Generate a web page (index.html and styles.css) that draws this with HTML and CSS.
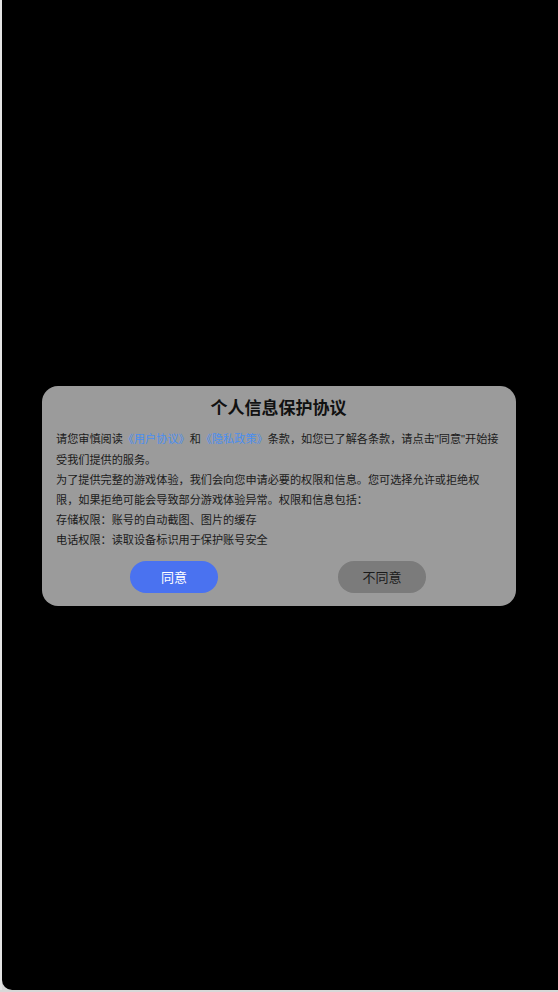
FILE: index.html
```html
<!DOCTYPE html>
<html lang="zh-CN">
<head>
<meta charset="utf-8">
<title>个人信息保护协议</title>
<link rel="stylesheet" href="styles.css">
</head>
<body>
<div class="frame">
  <div class="edge"></div>
  <div class="screen">
    <div class="dialog">
      <div class="title">个人信息保护协议</div>
      <div class="content">
        <p>请您审慎阅读<a class="link">《用户协议》</a>和<a class="link">《隐私政策》</a>条款，如您已了解各条款，请点击<span class="q">"</span>同意<span class="q">"</span>开始接受我们提供的服务。</p>
        <p>为了提供完整的游戏体验，我们会向您申请必要的权限和信息。您可选择允许或拒绝权限，如果拒绝可能会导致部分游戏体验异常。权限和信息包括：</p>
        <p>存储权限：账号的自动截图、图片的缓存</p>
        <p>电话权限：读取设备标识用于保护账号安全</p>
      </div>
      <div class="actions">
        <button class="btn btn-agree">同意</button>
        <button class="btn btn-decline">不同意</button>
      </div>
    </div>
  </div>
</div>
</body>
</html>
```
FILE: styles.css
```css
html, body {
  margin: 0;
  padding: 0;
  width: 558px;
  height: 992px;
  overflow: hidden;
  background: #d8d8d8;
  font-family: "Noto Sans CJK SC", "Noto Sans", sans-serif;
}

.frame {
  display: flex;
  height: 990px;
}

.edge {
  width: 2px;
  background: #e4e4e4;
}

.screen {
  flex: 1;
  background: #000;
  border-bottom-left-radius: 10px;
  display: flex;
  align-items: center;
  justify-content: center;
}

.dialog {
  width: 474px;
  box-sizing: border-box;
  margin-right: 2px;
  margin-top: 1px;
  background: #9b9b9b;
  border-radius: 16px;
  padding: 9px 15px 13px 14px;
}

.title {
  text-align: center;
  font-size: 17px;
  font-weight: bold;
  line-height: 24px;
  color: #111;
}

.content {
  margin-top: 9px;
  font-size: 11.15px;
  line-height: 20px;
  color: #1a1a1a;
}

.content p {
  margin: 0;
}

.q {
  font-family: "Liberation Sans", sans-serif;
}

.link {
  color: #4a8ef0;
}

.actions {
  display: flex;
  justify-content: center;
  gap: 120px;
  margin-top: 12px;
  padding-right: 1px;
}

.btn {
  width: 88px;
  height: 32px;
  border: none;
  border-radius: 16px;
  font-family: inherit;
  font-size: 13px;
  padding: 0;
}

.btn-agree {
  background: #4a72f0;
  color: #fff;
}

.btn-decline {
  background: #7b7b7b;
  color: #1a1a1a;
}
```
